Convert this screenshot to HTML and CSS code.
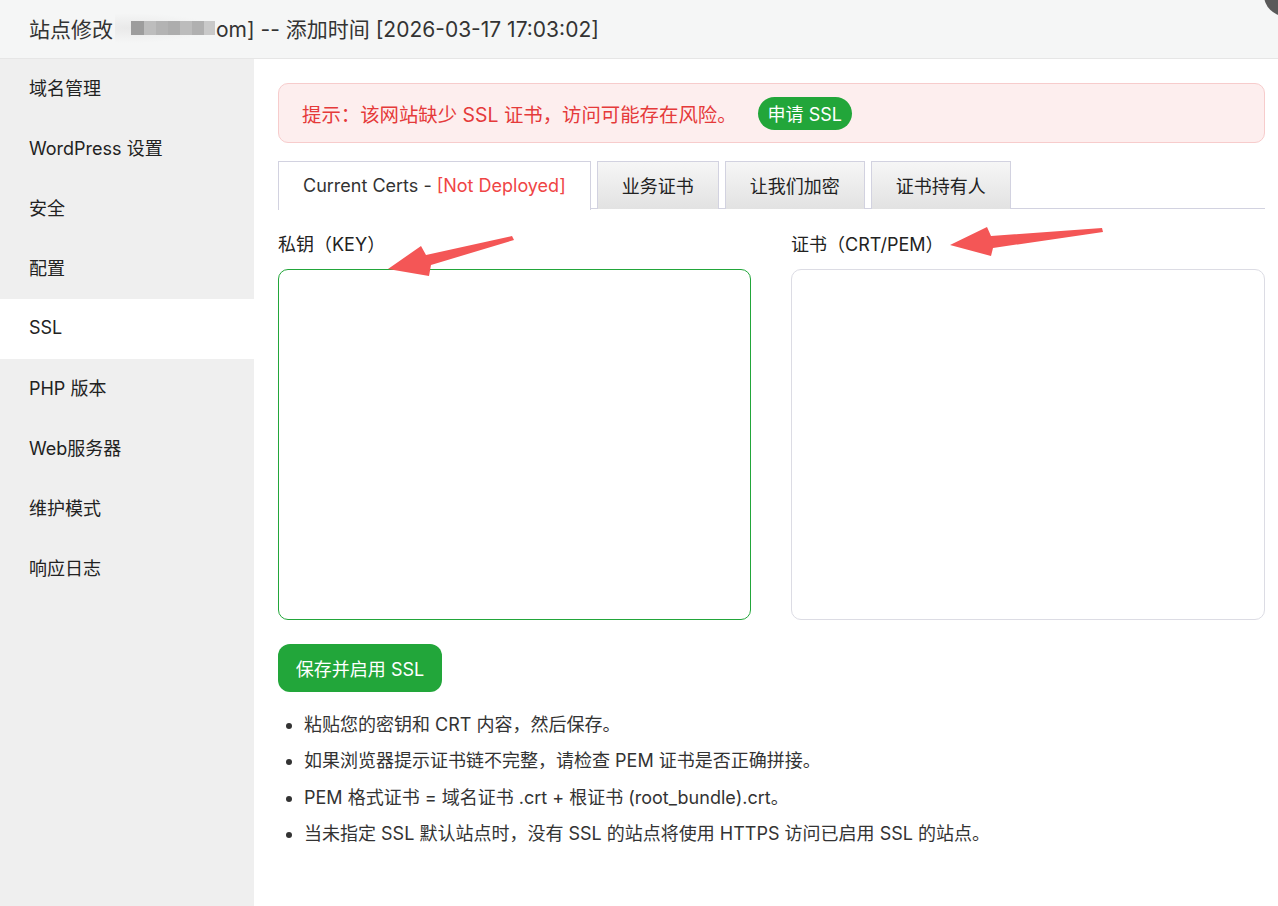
FILE: index.html
```html
<!DOCTYPE html>
<html lang="zh-CN">
<head>
<meta charset="utf-8">
<title>站点修改</title>
<link rel="stylesheet" href="styles.css">
</head>
<body>
<div class="dialog">
  <header class="header">
    <span class="title">站点修改<span class="blur"><i class="b1"></i><i class="b2"></i><i class="b3"></i><i class="b4"></i><i class="b5"></i><i class="b6"></i><i class="b7"></i></span>om] -- 添加时间 [2026-03-17 17:03:02]</span>
  </header>
  <div class="main">
    <nav class="sidebar">
      <div class="nav-item">域名管理</div>
      <div class="nav-item">WordPress 设置</div>
      <div class="nav-item">安全</div>
      <div class="nav-item">配置</div>
      <div class="nav-item active">SSL</div>
      <div class="nav-item">PHP 版本</div>
      <div class="nav-item">Web服务器</div>
      <div class="nav-item">维护模式</div>
      <div class="nav-item">响应日志</div>
    </nav>
    <section class="content">
      <div class="alert">
        <span class="alert-text">提示：该网站缺少 SSL 证书，访问可能存在风险。</span>
        <button class="pill-btn">申请 SSL</button>
      </div>
      <div class="tabs">
        <div class="tab active">Current Certs - <span class="warn">[Not Deployed]</span></div>
        <div class="tab">业务证书</div>
        <div class="tab">让我们加密</div>
        <div class="tab">证书持有人</div>
      </div>
      <div class="cert-grid">
        <div class="field">
          <label class="field-label">私钥（KEY）</label>
          <textarea class="cert-box focus"></textarea>
        </div>
        <div class="field">
          <label class="field-label">证书（CRT/PEM）</label>
          <textarea class="cert-box"></textarea>
        </div>
      </div>
      <button class="save-btn">保存并启用 SSL</button>
      <ul class="tips">
        <li>粘贴您的密钥和 CRT 内容，然后保存。</li>
        <li>如果浏览器提示证书链不完整，请检查 PEM 证书是否正确拼接。</li>
        <li>PEM 格式证书 = 域名证书 .crt + 根证书 (root_bundle).crt。</li>
        <li>当未指定 SSL 默认站点时，没有 SSL 的站点将使用 HTTPS 访问已启用 SSL 的站点。</li>
      </ul>
    </section>
  </div>
  <div class="close-dot"></div>
  <svg class="annot" width="1278" height="906" viewBox="0 0 1278 906">
    <polygon points="388,269 421,246 426,255 512,236 514,240 431,265 429,276" fill="#f45656"/>
    <polygon points="950,245 987,227 991,236 1102,228 1103,232 993,248 991,256" fill="#f45656"/>
  </svg>
</div>
</body>
</html>
```

FILE: styles.css
```css
* { box-sizing: border-box; }
html, body { margin: 0; padding: 0; }
body {
  font-family: Inter, "Noto Sans CJK SC", sans-serif;
  color: #333;
  background: #fff;
}
.dialog {
  position: relative;
  width: 1278px;
  height: 906px;
  overflow: hidden;
  display: flex;
  flex-direction: column;
}
.header {
  height: 59px;
  flex: none;
  background: #f5f6f6;
  border-bottom: 1px solid #e6e6e6;
  display: flex;
  align-items: center;
  padding: 0 0 3px 29px;
}
.title {
  font-size: 21px;
  color: #333;
  display: flex;
  align-items: center;
  white-space: pre;
}
.blur {
  display: inline-flex;
  align-items: center;
  height: 30px;
  margin: 0 1px 0 2px;
  padding-left: 16px;
  background: radial-gradient(ellipse at 15% 50%, #e9e9e9 0%, rgba(245,246,246,0) 70%);
}
.blur i { display: block; width: 12px; height: 14px; }
.blur .b1 { background: #9d9d9d; width: 13px; }
.blur .b2 { background: #bdbdbd; }
.blur .b3 { background: #b3b3b3; }
.blur .b4 { background: #adadad; }
.blur .b5 { background: #bcbcbc; }
.blur .b6 { background: #b0b0b0; }
.blur .b7 { background: #c9c9c9; width: 11px; }
.main {
  flex: 1;
  display: flex;
  min-height: 0;
}
.sidebar {
  width: 254px;
  flex: none;
  background: #efefef;
}
.nav-item {
  height: 60px;
  display: flex;
  align-items: center;
  padding: 0 0 4px 29px;
  font-size: 18px;
  color: #222;
}
.nav-item.active { background: #fff; }
.content {
  flex: 1;
  padding: 24px 13px 0 24px;
}
.alert {
  height: 60px;
  background: #fdeeee;
  border: 1px solid #f7cccc;
  border-radius: 10px;
  display: flex;
  align-items: center;
  padding-left: 23px;
  gap: 21px;
}
.alert-text { color: #e53a3a; font-size: 19.4px; }
.pill-btn {
  font-family: inherit;
  font-size: 18px;
  color: #fff;
  background: #22a63a;
  border: none;
  border-radius: 17px;
  height: 33px;
  padding: 0 10px;
}
.tabs {
  margin-top: 18px;
  display: flex;
  gap: 6px;
  border-bottom: 1px solid #d2d2e0;
  height: 48px;
}
.tab {
  height: 48px;
  border: 1px solid #d2d2e0;
  border-bottom: none;
  background: linear-gradient(#f6f6f6, #e2e2e2);
  font-size: 18px;
  color: #222;
  display: flex;
  align-items: center;
  padding: 0 24px 2px;
}
.tab.active {
  background: #fff;
  height: 49px;
  color: #333;
}
.warn { color: #ef4545; margin-left: 5px; }
.cert-grid {
  margin-top: 24px;
  display: grid;
  grid-template-columns: 473px 474px;
  column-gap: 40px;
}
.field { display: flex; flex-direction: column; }
.field-label {
  font-size: 18px;
  line-height: 24px;
  color: #222;
  margin-bottom: 12px;
}
.cert-box {
  height: 351px;
  resize: none;
  border: 1px solid #dcdce4;
  border-radius: 10px;
  background: #fff;
  outline: none;
}
.cert-box.focus { border-color: #22a63a; }
.save-btn {
  margin-top: 24px;
  height: 48px;
  width: 164px;
  border: none;
  border-radius: 12px;
  background: #22a63a;
  color: #fff;
  font-family: inherit;
  font-size: 18px;
  display: block;
  padding-bottom: 2px;
}
.tips {
  margin: 15px 0 0;
  padding-left: 26px;
  font-size: 18px;
  color: #333;
}
.tips li { line-height: 36.3px; }
.close-dot {
  position: absolute;
  right: -28px;
  top: -26px;
  width: 42px;
  height: 42px;
  border-radius: 50%;
  background: #5a5a5a;
}
.annot {
  position: absolute;
  left: 0;
  top: 0;
  pointer-events: none;
}
```
